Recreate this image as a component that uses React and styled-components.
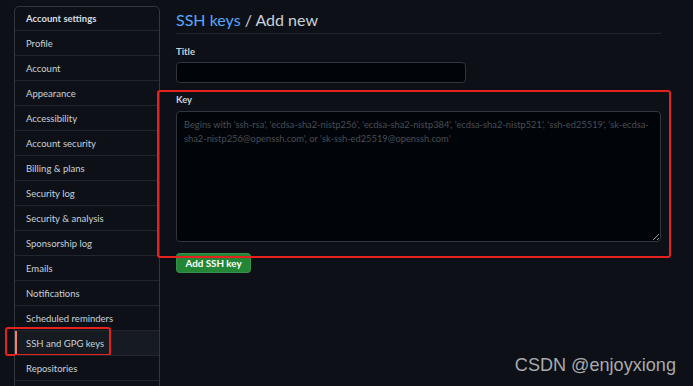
import React from "react";
import styled, { createGlobalStyle } from "styled-components";

const Global = createGlobalStyle`
  html, body {
    margin: 0;
    padding: 0;
    background: #0d1117;
    overflow: hidden;
    height: 386px;
  }
  body {
    font-family: Lato, "Noto Sans", "Liberation Sans", sans-serif;
    color: #c9d1d9;
  }
  * { box-sizing: border-box; }
`;

const Page = styled.div`
  position: relative;
  display: flex;
  align-items: flex-start;
  gap: 16px;
  padding: 6px 0 0 14px;
  height: 386px;
  overflow: hidden;
`;

const Sidebar = styled.nav`
  width: 146px;
  flex: none;
  border: 1px solid #30363d;
  border-radius: 5px;
  background: #0d1117;
`;

const MenuHeading = styled.div`
  height: 23px;
  display: flex;
  align-items: center;
  padding-left: 11px;
  font-size: 9.5px;
  font-weight: 700;
  color: #d8dee4;
`;

const MenuItem = styled.div`
  position: relative;
  height: 25px;
  display: flex;
  align-items: center;
  padding-left: 11px;
  font-size: 9.5px;
  color: #c9d1d9;
  border-top: 1px solid #21262d;
  background: ${(p) => (p.$selected ? "#161b22" : "transparent")};
  &::before {
    content: "";
    display: ${(p) => (p.$selected ? "block" : "none")};
    position: absolute;
    left: 0;
    top: 0;
    bottom: 1px;
    width: 2px;
    background: #f78166;
  }
`;

const MenuRest = styled.div`
  height: 40px;
  border-top: 1px solid #21262d;
`;

const Annotation = styled.div`
  position: absolute;
  border: 2px solid #e5221d;
  border-radius: 3px;
  pointer-events: none;
  left: ${(p) => p.$l}px;
  right: ${(p) => p.$r}px;
  top: ${(p) => p.$t}px;
  bottom: ${(p) => p.$b}px;
`;

const Main = styled.main`
  width: 485px;
  flex: none;
  display: flex;
  flex-direction: column;
  align-items: flex-start;
`;

const Heading = styled.h2`
  margin: 0;
  width: 100%;
  height: 28px;
  display: flex;
  align-items: center;
  gap: 4px;
  font-size: 16px;
  font-weight: 400;
  color: #c9d1d9;
  border-bottom: 1px solid #21262d;
`;

const Crumb = styled.span`
  color: #58a6ff;
`;

const FormGroup = styled.div`
  position: relative;
  width: 100%;
  display: flex;
  flex-direction: column;
  margin-top: ${(p) => p.$mt}px;
`;

const Label = styled.label`
  font-size: 9.5px;
  font-weight: 700;
  line-height: 14px;
  color: #c9d1d9;
  margin-bottom: ${(p) => p.$mb}px;
`;

const Input = styled.input`
  width: 290px;
  height: 21px;
  background: #010409;
  border: 1px solid #30363d;
  border-radius: 4px;
  outline: none;
  color: #c9d1d9;
`;

const TextArea = styled.textarea`
  width: 485px;
  height: 131px;
  background: #010409;
  border: 1px solid #30363d;
  border-radius: 4px;
  outline: none;
  padding: 6px 7px;
  font-family: inherit;
  font-size: 9.3px;
  line-height: 14px;
  color: #c9d1d9;
  resize: vertical;
  &::placeholder {
    color: #484f58;
  }
`;

const Button = styled.button`
  margin-top: 11px;
  height: 20px;
  width: 75px;
  padding: 0;
  background: #238636;
  border: 1px solid rgba(240, 246, 252, 0.1);
  border-radius: 4px;
  color: #ffffff;
  font-family: inherit;
  font-size: 9.8px;
  font-weight: 700;
`;

const Watermark = styled.div`
  position: absolute;
  right: 17px;
  bottom: 10px;
  font-family: "Liberation Sans", Arial, sans-serif;
  font-size: 18.1px;
  color: rgba(200, 200, 200, 0.85);
`;

const items = [
  "Profile",
  "Account",
  "Appearance",
  "Accessibility",
  "Account security",
  "Billing & plans",
  "Security log",
  "Security & analysis",
  "Sponsorship log",
  "Emails",
  "Notifications",
  "Scheduled reminders",
  "SSH and GPG keys",
  "Repositories",
];

export default function App() {
  return (
    <>
      <Global />
      <Page>
        <Sidebar>
          <MenuHeading>Account settings</MenuHeading>
          {items.map((it) => (
            <MenuItem key={it} $selected={it === "SSH and GPG keys"}>
              {it}
              {it === "SSH and GPG keys" && (
                <Annotation $l={-10} $r={48} $t={-4} $b={-1} />
              )}
            </MenuItem>
          ))}
          <MenuRest />
        </Sidebar>
        <Main>
          <Heading>
            <Crumb>SSH keys</Crumb>/ Add new
          </Heading>
          <FormGroup $mt={11}>
            <Label $mb={3}>Title</Label>
            <Input />
          </FormGroup>
          <FormGroup $mt={10}>
            <Annotation $l={-19} $r={-10} $t={-3} $b={-16} />
            <Label $mb={4}>Key</Label>
            <TextArea placeholder="Begins with 'ssh-rsa', 'ecdsa-sha2-nistp256', 'ecdsa-sha2-nistp384', 'ecdsa-sha2-nistp521', 'ssh-ed25519', 'sk-ecdsa-sha2-nistp256@openssh.com', or 'sk-ssh-ed25519@openssh.com'" />
          </FormGroup>
          <Button>Add SSH key</Button>
        </Main>
        <Watermark>CSDN @enjoyxiong</Watermark>
      </Page>
    </>
  );
}
